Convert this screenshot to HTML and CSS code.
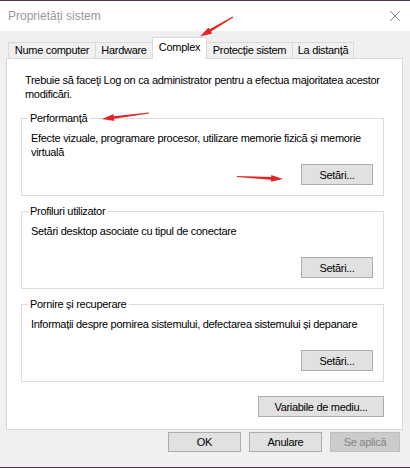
FILE: index.html
```html
<!DOCTYPE html>
<html lang="ro">
<head>
<meta charset="utf-8">
<title>Proprietăți sistem</title>
<link rel="stylesheet" href="styles.css">
</head>
<body>
<div class="win">
  <header class="titlebar">
    <span class="title">Proprietăți sistem</span>
    <svg class="close" width="12" height="12" viewBox="0 0 12 12"><path d="M1 1L11 11M11 1L1 11" stroke="#8c8c8c" stroke-width="1" fill="none"/></svg>
  </header>
  <div class="content">
    <nav class="tabs">
      <div class="tab t-nume">Nume computer</div>
      <div class="tab t-hw">Hardware</div>
      <div class="tab t-cx active">Complex</div>
      <div class="tab t-pr">Protecție sistem</div>
      <div class="tab t-ld last">La distanță</div>
    </nav>
    <section class="panel">
      <p class="intro">Trebuie să faceţi Log on ca administrator pentru a efectua majoritatea acestor modificări.</p>
      <fieldset class="group">
        <legend>Performanță</legend>
        <div class="gbody">
          <p>Efecte vizuale, programare procesor, utilizare memorie fizică și memorie virtuală</p>
          <button class="btn">Setări...</button>
        </div>
      </fieldset>
      <fieldset class="group">
        <legend>Profiluri utilizator</legend>
        <div class="gbody">
          <p>Setări desktop asociate cu tipul de conectare</p>
          <button class="btn">Setări...</button>
        </div>
      </fieldset>
      <fieldset class="group">
        <legend>Pornire și recuperare</legend>
        <div class="gbody">
          <p>Informații despre pornirea sistemului, defectarea sistemului și depanare</p>
          <button class="btn">Setări...</button>
        </div>
      </fieldset>
      <div class="envrow"><button class="btn wide">Variabile de mediu...</button></div>
    </section>
    <div class="actions">
      <button class="btn act">OK</button>
      <button class="btn act">Anulare</button>
      <button class="btn act disabled">Se aplică</button>
    </div>
  </div>
  <svg class="arrows" width="410" height="468" viewBox="0 0 410 468">
    <polygon fill="#e52421" points="232.7,16.5 209.6,29.3 208.5,27.4 200,36.5 212.1,33.4 211.0,31.5 233.3,17.5"/>
    <polygon fill="#e52421" points="148.9,112.4 113.7,116.2 113.5,114.0 102,119 114.3,121.0 114.1,118.8 149.1,113.6"/>
    <polygon fill="#e52421" points="237.0,177.1 270.9,179.65 270.8,181.8 283,179 271.2,174.9 271.1,177.05 237.0,175.9"/>
  </svg>
</div>
</body>
</html>
```

FILE: styles.css
```css
html, body {
  margin: 0;
  padding: 0;
  background: #f0f0f0;
}

.win {
  position: relative;
  width: 410px;
  height: 468px;
  box-sizing: border-box;
  border-top: 1px solid #5a2f4d;
  border-bottom: 1px solid #5a2f4d;
  background: #f0f0f0;
  display: flex;
  flex-direction: column;
  font-family: "Liberation Sans", Arial, sans-serif;
  font-size: 11px;
  letter-spacing: -0.3px;
  color: #000;
}

.titlebar {
  height: 30px;
  background: #fff;
  display: flex;
  align-items: center;
  justify-content: space-between;
  padding: 0 9px 0 8px;
  flex: none;
}

.title {
  font-size: 12px;
  letter-spacing: 0;
  color: #999;
}

.close {
  display: block;
}

.content {
  flex: 1;
  display: flex;
  flex-direction: column;
}

.tabs {
  display: flex;
  align-items: flex-end;
  padding: 6px 0 0 8px;
  height: 21px;
  position: relative;
  z-index: 2;
}

.tab {
  box-sizing: border-box;
  height: 16px;
  line-height: 15px;
  border-top: 1px solid #d9d9d9;
  border-left: 1px solid #d9d9d9;
  background: #f0f0f0;
  text-align: center;
}

.tab.last {
  border-right: 1px solid #d9d9d9;
}

.tab.active {
  height: 22px;
  line-height: 19px;
  margin-bottom: -1px;
  border-right: 1px solid #d9d9d9;
  background: #fff;
}

.t-nume { width: 87px; }
.t-hw { width: 57px; }
.t-cx { width: 55px; }
.t-pr { width: 85px; border-left: none; }
.t-ld { width: 62px; }

.panel {
  box-sizing: border-box;
  margin-left: 6px;
  width: 397px;
  height: 372px;
  border: 1px solid #d9d9d9;
  background: #fff;
  padding: 14px 18px 0 14px;
  position: relative;
  z-index: 1;
}

.intro {
  margin: 0 0 0 4px;
  line-height: 14px;
}

.group {
  margin: 10px 0 0 0;
  padding: 0 10px 10px 9px;
  border: 1px solid #dcdcdc;
  min-inline-size: 0;
}

.group + .group {
  margin-top: 8px;
}

.group legend {
  margin-left: -3px;
  padding: 0 3px 0 2px;
  line-height: 14px;
}

.gbody {
  display: flex;
  flex-direction: column;
  height: 54px;
  margin-top: 6px;
}

.gbody p {
  margin: 0;
  line-height: 14px;
}

.btn {
  font: inherit;
  letter-spacing: inherit;
  color: #000;
  box-sizing: border-box;
  height: 21px;
  width: 72px;
  padding: 0;
  background: #e1e1e1;
  border: 1px solid #adadad;
  border-radius: 0;
}

.gbody .btn {
  margin-top: auto;
  align-self: flex-end;
}

.envrow {
  display: flex;
  justify-content: flex-end;
  margin-top: 14px;
}

.btn.wide {
  width: 126px;
}

.actions {
  display: flex;
  justify-content: flex-end;
  gap: 8px;
  padding: 2px 10px 0 0;
}

.btn.act {
  width: 73px;
  height: 20px;
}

.btn.disabled {
  width: 70px;
  background: #cccccc;
  border-color: #bfbfbf;
  color: #838383;
}

.arrows {
  position: absolute;
  left: 0;
  top: -1px;
  z-index: 5;
  pointer-events: none;
}
```
